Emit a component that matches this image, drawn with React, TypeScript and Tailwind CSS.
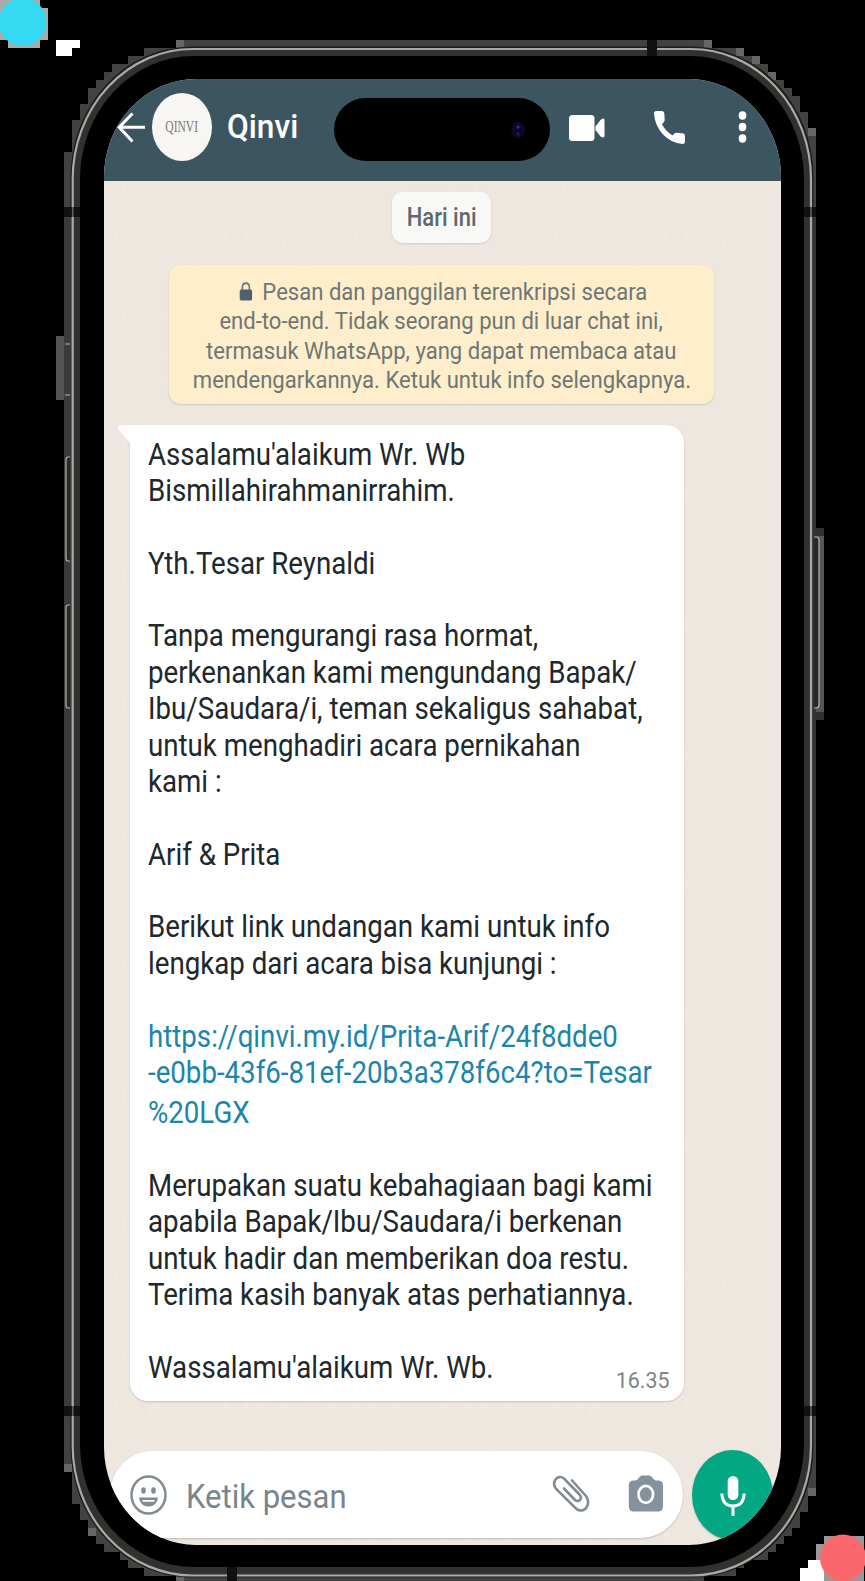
import React from "react";

const greeting: string[] = [
  "Assalamu'alaikum Wr. Wb",
  "Bismillahirahmanirrahim.",
  "",
  "Yth.Tesar Reynaldi",
  "",
  "Tanpa mengurangi rasa hormat,",
  "perkenankan kami mengundang Bapak/",
  "Ibu/Saudara/i, teman sekaligus sahabat,",
  "untuk menghadiri acara pernikahan",
  "kami :",
  "",
  "Arif & Prita",
  "",
  "Berikut link undangan kami untuk info",
  "lengkap dari acara bisa kunjungi :",
  "",
];

const closing: string[] = [
  "",
  "Merupakan suatu kebahagiaan bagi kami",
  "apabila Bapak/Ibu/Saudara/i berkenan",
  "untuk hadir dan memberikan doa restu.",
  "Terima kasih banyak atas perhatiannya.",
  "",
  "Wassalamu'alaikum Wr. Wb.",
];

function Lines({ lines }: { lines: string[] }) {
  return (
    <>
      {lines.map((line, i) => (
        <div key={i} className="h-[36.38px]">
          {line}
        </div>
      ))}
    </>
  );
}

/* Metal rim, side buttons and the blocky halo around the handset */
function Frame() {
  return (
    <svg className="absolute inset-0" width="865" height="1581" viewBox="0 0 865 1581">
      <path
        fill="#424242"
        shapeRendering="crispEdges"
        d="M176 40H712V48H744V56H760V64H768V72H776V80H784V88H792V96H800V112H808V128H816V1496H808V1512H800V1528H792V1536H784V1544H776V1552H768V1560H744V1568H736V1576H704V1581H176V1576H144V1568H128V1560H120V1552H104V1544H96V1536H88V1520H80V1504H72V1472H64V152H72V120H80V104H88V88H96V80H104V72H112V64H128V56H144V48H176Z"
      />
      <g fill="#666" shapeRendering="crispEdges">
        <path d="M176 40h8v8h-8zM704 40h8v8h-8zM736 48h8v8h-8zM752 56h8v8h-8zM768 72h8v8h-8zM808 128h8v8h-8zM64 1464h8v8h-8zM88 1528h8v8h-8zM176 1576h8v5h-8zM808 1488h8v8h-8z" />
        <path fill="#555" d="M56 336h8v64h-8zM816 536h8v176h-8z" />
        <path fill="#303030" d="M816 528h8v8h-8zM816 712h8v8h-8z" />
      </g>
      <rect x="70.5" y="46.500" width="743" height="1531" rx="121" ry="131" fill="#1c1c1b" />
      <rect x="64" y="217" width="8" height="1189" fill="#3a3a3a" />
      <rect x="812" y="217" width="4" height="1189" fill="#333" />
      <rect x="72.700" y="49" width="738.300" height="1526.500" rx="120" ry="130" fill="#31312f" stroke="#aaa9a4" strokeWidth="2.200" />
      <rect x="80" y="56" width="724" height="1511" rx="114" ry="123" fill="#000" />
      <g fill="#111">
        <path d="M647 40h10v16h-10zM64 207h16v10H64zM804 207h12v10h-12zM64 1406h16v10H64zM804 1406h12v10h-12zM227 1567h10v14h-10z" />
      </g>
      <path stroke="#aaa9a4" strokeWidth="1.500" strokeOpacity=".55" d="M72.700 205v14M811 205v14M72.700 1404v14M811 1404v14" />
      <g fill="#292929" stroke="#b5b5b0" strokeWidth="1.200">
        <path d="M70 344h-5M70 395h-5" />
        <path d="M70 457h-2q-2 0-2 3v98q0 3 2 3h2" />
        <path d="M70 605h-2q-2 0-2 3v97q0 3 2 3h2" />
        <path d="M814 537h2q3 0 3 3v165q0 3-3 3h-2" />
      </g>
      <g shapeRendering="crispEdges">
        <path fill="#aaa" d="M0 0h40v8h8v32h-8v8H8v-8H0z" />
        <path fill="#fff" d="M56 40h24v8h-8v8H56zM808 1560h16v21h-24v-13h8z" />
        <path fill="#999" d="M824 1536h40v45h-40v-21h-8v-16h8z" />
      </g>
      <ellipse cx="22.500" cy="22" rx="24" ry="24" fill="#35d9f1" />
      <ellipse cx="843" cy="1558" rx="23" ry="23.500" fill="#fa686b" />
    </svg>
  );
}

/* Faint doodles printed on the chat wallpaper */
function Wallpaper() {
  return (
    <svg className="absolute inset-0 opacity-10" width="677" height="1466">
      <defs>
        <pattern id="doodles" width="110" height="130" patternUnits="userSpaceOnUse">
          <g fill="none" stroke="#fff" strokeWidth="2">
            <circle cx="22" cy="26" r="11" />
            <path d="M52 14l22 6-6 22-22-6zM88 34q14 8 2 22t-14 8M10 70q12-14 24 0t24 0M72 84l9 16 12-14M20 98h22v16H20zM60 112q8-12 18 0" />
          </g>
        </pattern>
      </defs>
      <rect width="677" height="1466" fill="url(#doodles)" />
    </svg>
  );
}

function Header() {
  return (
    <header className="relative flex h-[102px] shrink-0 bg-[#3c5661] text-white">
      <svg className="ml-[13px] mt-[33px] h-[31px] w-[29px]" viewBox="0 0 29 31" fill="none" stroke="#fff" strokeWidth="3">
        <path d="M28 15.300H2M15.500 1.500L2.200 15.300L15.500 29.500" />
      </svg>
      <div className="ml-[6px] mt-[14px] flex h-[68px] w-[60px] items-center justify-center rounded-[50%] bg-[#f8f6f2]">
        <span className="scale-x-[0.72] font-['Liberation_Serif',serif] text-[16px] leading-none text-[#7d7974]">QINVI</span>
      </div>
      <h1 className="ml-[15px] mt-[27px] w-[75px] origin-left scale-x-[0.93] whitespace-nowrap text-[34px] font-medium leading-[40px]">Qinvi</h1>
      <div className="ml-[32px] mt-[19px] flex h-[63px] w-[216px] items-center rounded-full bg-black">
        <svg className="ml-[176px] h-[20px] w-[16px]" viewBox="0 0 16 20">
          <ellipse cx="8" cy="10" rx="7" ry="8" fill="#0b0724" />
          <circle cx="8" cy="7" r="1.700" fill="#33249a" />
          <circle cx="8" cy="14" r="1.700" fill="#24186e" />
        </svg>
      </div>
      <svg className="ml-[19px] mt-[36px] h-[27px] w-[36px]" viewBox="0 0 36 27" fill="#fff">
        <rect x="0" y="0" width="25.500" height="26" rx="3.500" />
        <path d="M26.500 11.500L31.500 5Q35.500 2 35.500 5.500V20.500Q35.500 24 31.500 21.500L26.500 15z" />
      </svg>
      <svg className="ml-[49px] mt-[32px] h-[33px] w-[31px]" viewBox="3 3 18 18" preserveAspectRatio="none" fill="#fff">
        <path d="M4.300 3H7.300C8.500 3 8.900 3.500 9 4.600L9.200 7.800C9.200 8.800 8.600 9.300 7.600 10.200C9.200 12.900 11.200 14.900 13.800 16.300C14.600 15.400 15.100 14.900 16.100 14.900L19.300 15.200C20.500 15.300 21 15.800 21 16.900V19.700C21 20.600 20.500 21 19.700 21C10.700 20.300 3.700 13.200 3 4.400C3 3.500 3.500 3 4.300 3Z" />
      </svg>
      <svg className="ml-[53px] mt-[31px] h-[34px] w-[9px]" viewBox="0 0 9 34" fill="#fff">
        <ellipse cx="4.500" cy="5.500" rx="3.800" ry="4.200" />
        <ellipse cx="4.500" cy="17" rx="3.800" ry="4.200" />
        <ellipse cx="4.500" cy="28.500" rx="3.800" ry="4.200" />
      </svg>
    </header>
  );
}

function Composer() {
  return (
    <div className="relative mt-[50px] flex">
      <div className="ml-[6px] flex h-[87px] w-[573px] rounded-[43px/44px] bg-white shadow-[0_1px_2px_rgba(0,0,0,0.2)]">
        <svg className="ml-[20px] mt-[24px] h-[40px] w-[37px]" viewBox="0 0 37 40" fill="none" stroke="#818c90" strokeWidth="2.500">
          <ellipse cx="18.500" cy="20" rx="17" ry="18.500" />
          <ellipse cx="13.500" cy="15.500" rx="2.300" ry="3.300" fill="#818c90" stroke="none" />
          <ellipse cx="23.500" cy="15.500" rx="2.300" ry="3.300" fill="#818c90" stroke="none" />
          <path d="M9 22.500H28Q27 31.500 18.500 31.500T9 22.500Z" fill="#818c90" stroke="none" />
          <path d="M12.500 25.800H24.500" stroke="#fff" strokeWidth="1.800" />
        </svg>
        <span className="ml-[19px] mt-[26px] w-[162px] origin-left scale-x-[0.94] whitespace-nowrap text-[33px] leading-[40px] text-[#78858a]">Ketik pesan</span>
        <svg className="ml-[204px] mt-[24px] h-[38px] w-[38px]" viewBox="0 0 38 38" fill="none" stroke="#818c90" strokeWidth="2.600" strokeLinecap="round">
          <path d="M20 5.500L34 21C38.500 27 35 36 28 35.500C26 35.300 24 34 22.500 32.200L4.200 14C-1 7.500 5 -1.500 12 3.500L27.500 19.500C31 23.500 26.500 28.500 22.500 24.500L12 13.500" />
        </svg>
        <svg className="ml-[38px] mt-[24px] h-[37px] w-[36px]" viewBox="0 0 36 37">
          <path fill="#83929b" d="M10 4Q12 .5 14 .5H21.500Q23.500 .5 25.500 4Q26.500 5.500 29 5.500H30Q35 5.500 35 10.500V31Q35 36.500 30 36.500H5.800Q.8 36.500.8 31V10.500Q.8 5.500 5.800 5.500H6.500Q9 5.500 10 4Z" />
          <ellipse cx="17.800" cy="19.300" rx="7.300" ry="8.500" fill="none" stroke="#fff" strokeWidth="2.700" />
        </svg>
      </div>
      <div className="-mt-[1px] ml-[9px] flex h-[90px] w-[81px] items-start justify-center rounded-[50%] bg-[#04a784] shadow-[0_1px_2px_rgba(0,0,0,0.2)]">
        <svg className="mt-[25px] h-[42px] w-[26px]" viewBox="0 0 26 42">
          <rect x="7.700" y="1" width="10.600" height="24" rx="5.300" fill="#fff" />
          <path d="M1.800 18.500Q2.500 31 13 31T24.200 18.500M13 31V41" fill="none" stroke="#fff" strokeWidth="3" />
        </svg>
      </div>
    </div>
  );
}

export default function App() {
  return (
    <main className="relative h-[1581px] w-[865px] overflow-hidden bg-black pl-[104px] pt-[79px] font-['Roboto',sans-serif]">
      <Frame />
      <section className="relative flex h-[1466px] w-[677px] flex-col overflow-hidden rounded-[92px/98px] bg-[#eee7df]">
        <Wallpaper />
        <Header />
        <div className="relative ml-[288px] mt-[11px] flex h-[51px] w-[99px] items-center justify-center rounded-[11px] bg-[#f8f9f7] shadow-[0_1px_2px_rgba(0,0,0,0.12)]">
          <span className="scale-x-[0.88] whitespace-nowrap text-[25px] font-medium leading-[28px] text-[#5d696e]">Hari ini</span>
        </div>
        <div className="relative ml-[65px] mt-[22px] flex h-[139px] w-[545px] flex-col items-center rounded-[12px] bg-[#ffeecb] pt-[12px] text-[24.800px] leading-[29.250px] text-[#6d7774] shadow-[0_1px_2px_rgba(0,0,0,0.14)]">
          <div className="ml-[4px] flex scale-x-[0.89] items-center whitespace-nowrap">
            <svg className="mr-[11px] h-[19px] w-[15px]" viewBox="0 0 16 19" preserveAspectRatio="none">
              <path d="M3.800 9V5.500Q3.800 1.300 8 1.300T12.200 5.500V9" fill="none" stroke="#6f7a7b" strokeWidth="2" />
              <rect x=".5" y="7.500" width="15" height="11" rx="2" fill="#4f6171" />
            </svg>
            Pesan dan panggilan terenkripsi secara
          </div>
          <div className="scale-x-[0.89] whitespace-nowrap">end-to-end. Tidak seorang pun di luar chat ini,</div>
          <div className="scale-x-[0.89] whitespace-nowrap">termasuk WhatsApp, yang dapat membaca atau</div>
          <div className="scale-x-[0.89] whitespace-nowrap">mendengarkannya. Ketuk untuk info selengkapnya.</div>
        </div>
        <article className="relative ml-[26px] mt-[21px] h-[976px] w-[554px] shrink-0 rounded-[18px] rounded-tl-none bg-white pl-[18px] pt-[11.500px] shadow-[0_1px_2px_rgba(0,0,0,0.16)]">
          <svg className="absolute -left-[12px] top-0" width="13" height="20" viewBox="0 0 13 20">
            <path d="M13 0H2Q-1 1 1 5L13 19Z" fill="#fff" />
          </svg>
          <div className="origin-left scale-x-[0.907] whitespace-nowrap text-[30.500px] leading-[36.380px] text-[#20282c]">
            <Lines lines={greeting} />
            <a className="block text-[#1c85ac]">
              <Lines lines={["https://qinvi.my.id/Prita-Arif/24f8dde0", "-e0bb-43f6-81ef-20b3a378f6c4?to=Tesar"]} />
              <div className="h-[40.380px] pt-[4px]">%20LGX</div>
            </a>
            <Lines lines={closing} />
          </div>
          <time className="absolute bottom-[8px] right-[14px] origin-right scale-x-[0.95] text-[22.500px] leading-[26px] text-[#7d8487]">16.35</time>
        </article>
        <Composer />
      </section>
    </main>
  );
}
